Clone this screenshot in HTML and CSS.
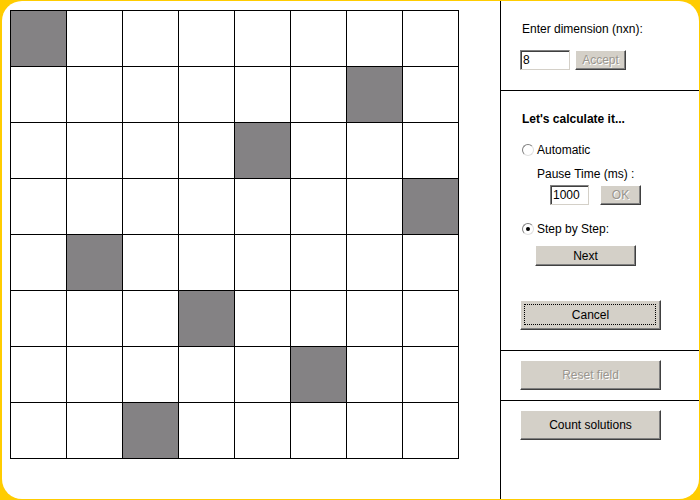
FILE: index.html
```html
<!DOCTYPE html>
<html lang="en">
<head>
    <meta charset="UTF-8">
    <title>N Queens</title>
    <link rel="stylesheet" href="styles.css">
</head>
<body>
    <div class="frame">
        <div class="board-wrap">
            <div class="board" id="board"></div>
        </div>

        <div class="panel">
            <div class="section dim">
                <div class="label">Enter dimension (nxn):</div>
                <div class="row">
                    <input class="field dim-field" type="text" value="8">
                    <button class="btn accept" disabled>Accept</button>
                </div>
            </div>

            <div class="section calc">
                <div class="label title">Let's calculate it...</div>
                <div class="radio-row first">
                    <span class="radio"></span>
                    <span>Automatic</span>
                </div>
                <div class="pause-label">Pause Time (ms) :</div>
                <div class="row pause-row">
                    <input class="field pause-field" type="text" value="1000">
                    <button class="btn ok" disabled>OK</button>
                </div>
                <div class="radio-row second">
                    <span class="radio checked"></span>
                    <span>Step by Step:</span>
                </div>
                <button class="btn next">Next</button>
                <button class="btn wide cancel"><span class="focus">Cancel</span></button>
            </div>

            <div class="section reset">
                <button class="btn wide" disabled>Reset field</button>
            </div>

            <div class="section count">
                <button class="btn wide">Count solutions</button>
            </div>
        </div>
    </div>

    <script>
        // queen column for every row
        const queens = [0, 6, 4, 7, 1, 3, 5, 2];
        const board = document.getElementById('board');

        for (let r = 0; r < 8; r++) {
            for (let c = 0; c < 8; c++) {
                const cell = document.createElement('div');
                cell.className = queens[r] === c ? 'cell queen' : 'cell';
                board.appendChild(cell);
            }
        }
    </script>
</body>
</html>
```

FILE: styles.css
```css
html, body {
    margin: 0;
    padding: 0;
}
body {
    background-color: #ffcc00;
    font-family: "Liberation Sans", Arial, sans-serif;
    font-size: 12px;
    line-height: 14px;
    color: #000;
    width: 700px;
    height: 500px;
    overflow: hidden;
}
.frame {
    display: flex;
    width: 697px;
    height: 498px;
    margin: 1px 1px 1px 2px;
    background-color: #fff;
    border-radius: 20px;
    overflow: hidden;
}
.board-wrap {
    width: 498px;
    padding: 9px 0 0 8px;
    box-sizing: border-box;
}
.board {
    display: grid;
    grid-template-columns: repeat(8, 55px);
    grid-auto-rows: 55px;
    gap: 1px;
    padding: 1px;
    background-color: #000;
    width: max-content;
}
.cell {
    background-color: #fff;
}
.cell.queen {
    background-color: #848284;
}
.panel {
    flex: 1;
    display: flex;
    flex-direction: column;
    border-left: 1px solid #000;
}
.section {
    box-sizing: border-box;
    border-bottom: 1px solid #000;
    padding-left: 19px;
}
.section.dim {
    height: 90px;
    padding-top: 21px;
}
.section.calc {
    height: 260px;
    padding-top: 21px;
    display: flex;
    flex-direction: column;
    align-items: flex-start;
}
.section.reset {
    height: 50px;
    padding-top: 9px;
}
.section.count {
    flex: 1;
    border-bottom: none;
    padding-top: 9px;
}
.label {
    margin-left: 2px;
}
.title {
    font-weight: bold;
}
.row {
    display: flex;
    align-items: flex-start;
}
.section.dim .row {
    margin-top: 14px;
}
.field {
    box-sizing: border-box;
    height: 20px;
    padding: 0 0 0 2px;
    margin: 0;
    font-family: inherit;
    font-size: 12px;
    border: 1px solid;
    border-color: #808080 #d4d0c8 #d4d0c8 #808080;
    box-shadow: inset 1px 1px #404040;
    outline: none;
}
.dim-field {
    width: 50px;
}
.pause-field {
    width: 39px;
}
.btn {
    box-sizing: border-box;
    margin: 0;
    padding: 0;
    font-family: inherit;
    font-size: 12px;
    color: #000;
    background-color: #d4d0c8;
    border: 1px solid;
    border-color: #fff #404040 #404040 #fff;
    box-shadow: inset -1px -1px #808080;
    border-radius: 0;
}
.btn:disabled {
    color: #9a968f;
    text-shadow: 1px 1px #fff;
}
.accept {
    width: 51px;
    height: 20px;
    margin-left: 5px;
}
.ok {
    width: 41px;
    height: 20px;
    margin-left: 11px;
}
.radio-row {
    display: flex;
    align-items: center;
    height: 14px;
    margin-left: 2px;
}
.radio-row.first {
    margin-top: 17px;
}
.radio-row.second {
    margin-top: 17px;
}
.radio {
    box-sizing: border-box;
    width: 12px;
    height: 12px;
    margin-right: 3px;
    border-radius: 50%;
    border: 1px solid;
    border-color: #808080 #e0e0e0 #e0e0e0 #808080;
    background-color: #fff;
    position: relative;
}
.radio.checked::after {
    content: "";
    position: absolute;
    left: 3px;
    top: 3px;
    width: 4px;
    height: 4px;
    border-radius: 50%;
    background-color: #000;
}
.pause-label {
    margin-top: 10px;
    margin-left: 17px;
}
.pause-row {
    margin-top: 4px;
    margin-left: 30px;
}
.next {
    width: 101px;
    height: 21px;
    margin-top: 9px;
    margin-left: 15px;
}
.wide {
    width: 141px;
    height: 30px;
}
.cancel {
    margin-top: 34px;
    position: relative;
}
.cancel .focus::before {
    content: "";
    position: absolute;
    left: 3px;
    top: 3px;
    right: 4px;
    bottom: 4px;
    border: 1px dotted #000;
}
```
